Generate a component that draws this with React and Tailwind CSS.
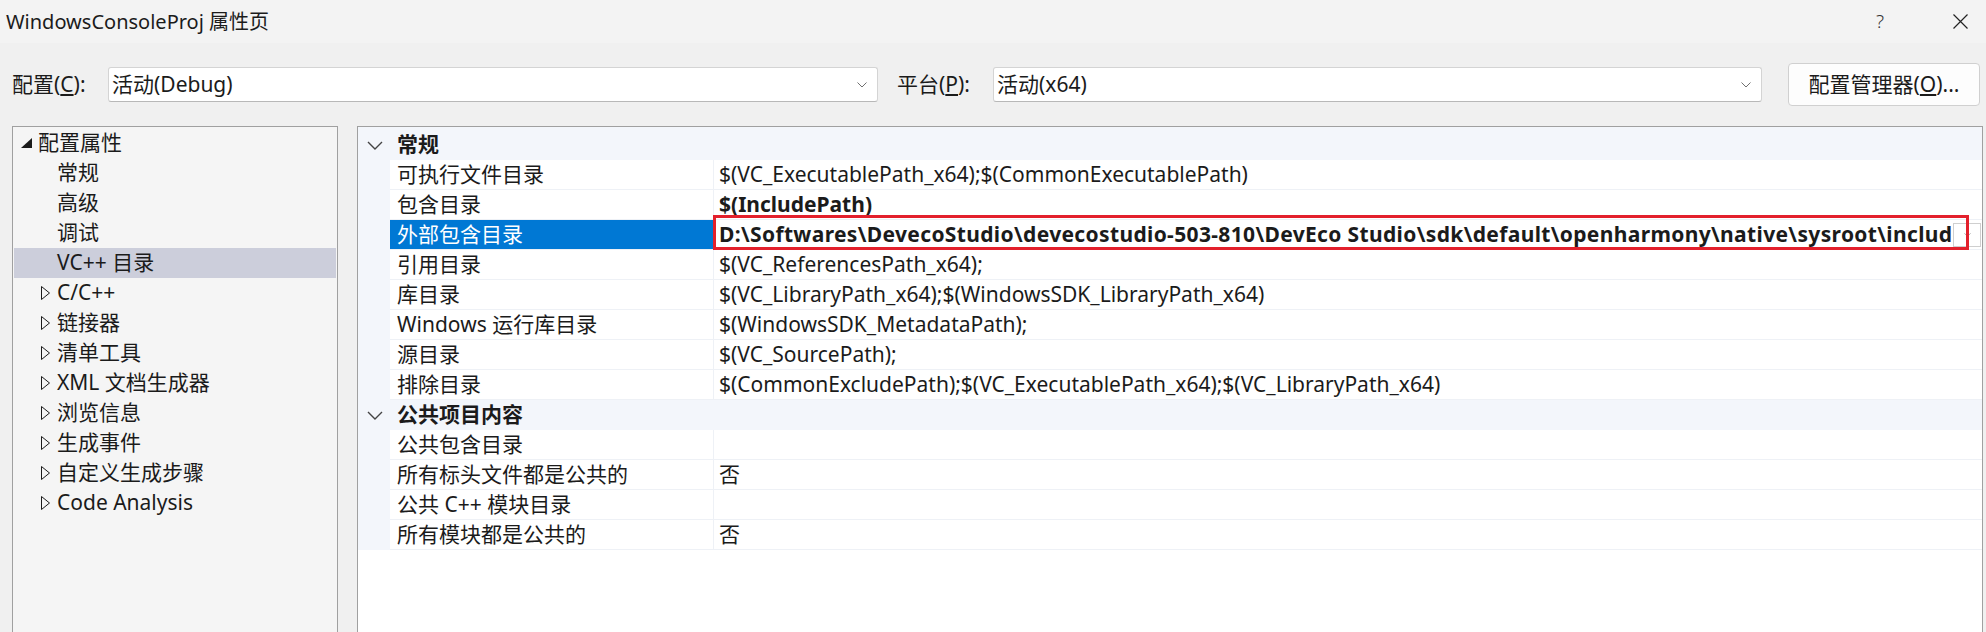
import React from 'react';

const generalRows = [
  { name: '可执行文件目录', value: '$(VC_ExecutablePath_x64);$(CommonExecutablePath)' },
  { name: '包含目录', value: '$(IncludePath)', bold: true },
  {
    name: '外部包含目录',
    value: 'D:\\Softwares\\DevecoStudio\\devecostudio-503-810\\DevEco Studio\\sdk\\default\\openharmony\\native\\sysroot\\include',
    bold: true,
    selected: true,
  },
  { name: '引用目录', value: '$(VC_ReferencesPath_x64);' },
  { name: '库目录', value: '$(VC_LibraryPath_x64);$(WindowsSDK_LibraryPath_x64)' },
  { name: 'Windows 运行库目录', value: '$(WindowsSDK_MetadataPath);' },
  { name: '源目录', value: '$(VC_SourcePath);' },
  { name: '排除目录', value: '$(CommonExcludePath);$(VC_ExecutablePath_x64);$(VC_LibraryPath_x64)' },
];

const publicRows = [
  { name: '公共包含目录', value: '' },
  { name: '所有标头文件都是公共的', value: '否' },
  { name: '公共 C++ 模块目录', value: '' },
  { name: '所有模块都是公共的', value: '否' },
];

const treeItems = [
  { label: '常规' },
  { label: '高级' },
  { label: '调试' },
  { label: 'VC++ 目录', selected: true },
  { label: 'C/C++', expandable: true },
  { label: '链接器', expandable: true },
  { label: '清单工具', expandable: true },
  { label: 'XML 文档生成器', expandable: true },
  { label: '浏览信息', expandable: true },
  { label: '生成事件', expandable: true },
  { label: '自定义生成步骤', expandable: true },
  { label: 'Code Analysis', expandable: true },
];

function SmallChevron({ className = '' }) {
  return (
    <svg viewBox="0 0 10 6" className={className} fill="none" stroke="currentColor" strokeWidth="1">
      <path d="M0.5 0.5 L5 5 L9.5 0.5" />
    </svg>
  );
}

function Dropdown({ value, className = '' }) {
  return (
    <div className={`h-[35px] bg-white border border-[#d4d4d4] border-b-[#b8b8b8] rounded-[3px] flex items-center pl-[3px] pr-[10px] ${className}`}>
      <span className="flex-1 whitespace-nowrap">{value}</span>
      <SmallChevron className="w-[10px] h-[6px] text-[#707070]" />
    </div>
  );
}

function HeaderRow({ title }) {
  return (
    <div className="h-[30px] flex items-center">
      <div className="w-[32px] flex justify-center pl-[1px]">
        <svg viewBox="0 0 16 9" className="w-[16px] h-[9px] text-[#444]" fill="none" stroke="currentColor" strokeWidth="1.4">
          <path d="M1 1 L8 8 L15 1" />
        </svg>
      </div>
      <span className="pl-[7px] font-bold">{title}</span>
    </div>
  );
}

function PropRow({ row }) {
  return (
    <div className="h-[30px] flex">
      <div className="w-[32px] shrink-0" />
      <div className="flex-1 min-w-0 flex bg-white border-b border-[#eef1f6]">
        <div
          className={`w-[324px] shrink-0 border-r border-[#eef1f6] flex items-center pl-[7px] whitespace-nowrap ${
            row.selected ? 'bg-[#0078d4] text-white' : ''
          }`}
        >
          {row.name}
        </div>
        <div className="relative flex-1 flex items-center min-w-0">
          <span
            className={`flex-1 min-w-0 pl-[5px] whitespace-nowrap overflow-hidden leading-[29px] ${row.bold ? 'font-bold' : ''} ${
              row.selected ? 'tracking-[0.35px]' : ''
            }`}
          >
            {row.value}
          </span>
          {row.selected && (
            <>
              <div className="w-[28px] h-[24px] shrink-0 mr-[1px] border border-[#cfcfcf] bg-white flex items-center justify-center">
                <SmallChevron className="w-[7px] h-[4px] text-[#808080]" />
              </div>
              {/* red highlight annotation */}
              <div className="absolute left-[-1px] top-[-5px] w-[1256px] h-[35px] border-[3px] border-[#e3202c] pointer-events-none" />
            </>
          )}
        </div>
      </div>
    </div>
  );
}

export default function App() {
  return (
    <div className="w-[1986px] h-[632px] overflow-hidden bg-[#f0f0f0] text-[#1b1b1b] text-[21px] leading-[1.3] font-['Noto_Sans','Noto_Sans_CJK_SC',sans-serif]">
      {/* Title bar */}
      <div className="h-[43px] bg-[#f3f3f3] flex items-center">
        <span className="flex-1 pl-[6px] text-[20px]">WindowsConsoleProj 属性页</span>
        <span className="w-[20px] text-center text-[19px] text-[#333] font-light">?</span>
        <svg viewBox="0 0 15 15" className="ml-[63px] mr-[18px] w-[15px] h-[15px] text-[#222]" fill="none" stroke="currentColor" strokeWidth="1.2">
          <path d="M0.5 0.5 L14.5 14.5 M14.5 0.5 L0.5 14.5" />
        </svg>
      </div>

      {/* Configuration / platform row */}
      <div className="h-[83px] flex items-center">
        <span className="w-[108px] shrink-0 pl-[12px] whitespace-nowrap">
          配置(<span className="underline underline-offset-2">C</span>):
        </span>
        <Dropdown value="活动(Debug)" className="w-[770px] shrink-0" />
        <span className="ml-[19px] w-[96px] shrink-0 whitespace-nowrap">
          平台(<span className="underline underline-offset-2">P</span>):
        </span>
        <Dropdown value="活动(x64)" className="w-[769px] shrink-0" />
        <button className="ml-[26px] w-[192px] h-[43px] shrink-0 bg-[#fdfdfd] border border-[#d0d0d0] rounded-[4px] whitespace-nowrap">
          配置管理器(<span className="underline underline-offset-2">O</span>)...
        </button>
      </div>

      {/* Panels */}
      <div className="flex pl-[12px] gap-[19px] items-start">
        {/* Tree */}
        <div className="w-[326px] h-[540px] shrink-0 border border-[#a0a0a0] bg-[#f5f5f5] p-[1px]">
          <div className="h-[30px] flex items-center pl-[7px]">
            <div className="w-[17px]">
              <svg viewBox="0 0 11 10" className="w-[11px] h-[10px]">
                <polygon points="11,0 11,10 0,10" fill="#1b1b1b" />
              </svg>
            </div>
            <span>配置属性</span>
          </div>
          {treeItems.map((item) => (
            <div
              key={item.label}
              className={`h-[30px] flex items-center pl-[27px] ${item.selected ? 'bg-[#cccedb]' : ''}`}
            >
              <div className="w-[16px]">
                {item.expandable && (
                  <svg viewBox="0 0 9 14" className="w-[9px] h-[14px]" fill="none" stroke="#1b1b1b" strokeWidth="1">
                    <polygon points="0.5,0.5 8.5,7 0.5,13.5" />
                  </svg>
                )}
              </div>
              <span className="whitespace-nowrap">{item.label}</span>
            </div>
          ))}
        </div>

        {/* Property grid */}
        <div className="w-[1626px] h-[540px] shrink-0 border border-[#a0a0a0] bg-white">
          <div className="bg-[#f3f6fb] pt-[3px]">
            <HeaderRow title="常规" />
            {generalRows.map((row) => (
              <PropRow key={row.name} row={row} />
            ))}
            <HeaderRow title="公共项目内容" />
            {publicRows.map((row) => (
              <PropRow key={row.name} row={row} />
            ))}
          </div>
        </div>
      </div>
    </div>
  );
}
